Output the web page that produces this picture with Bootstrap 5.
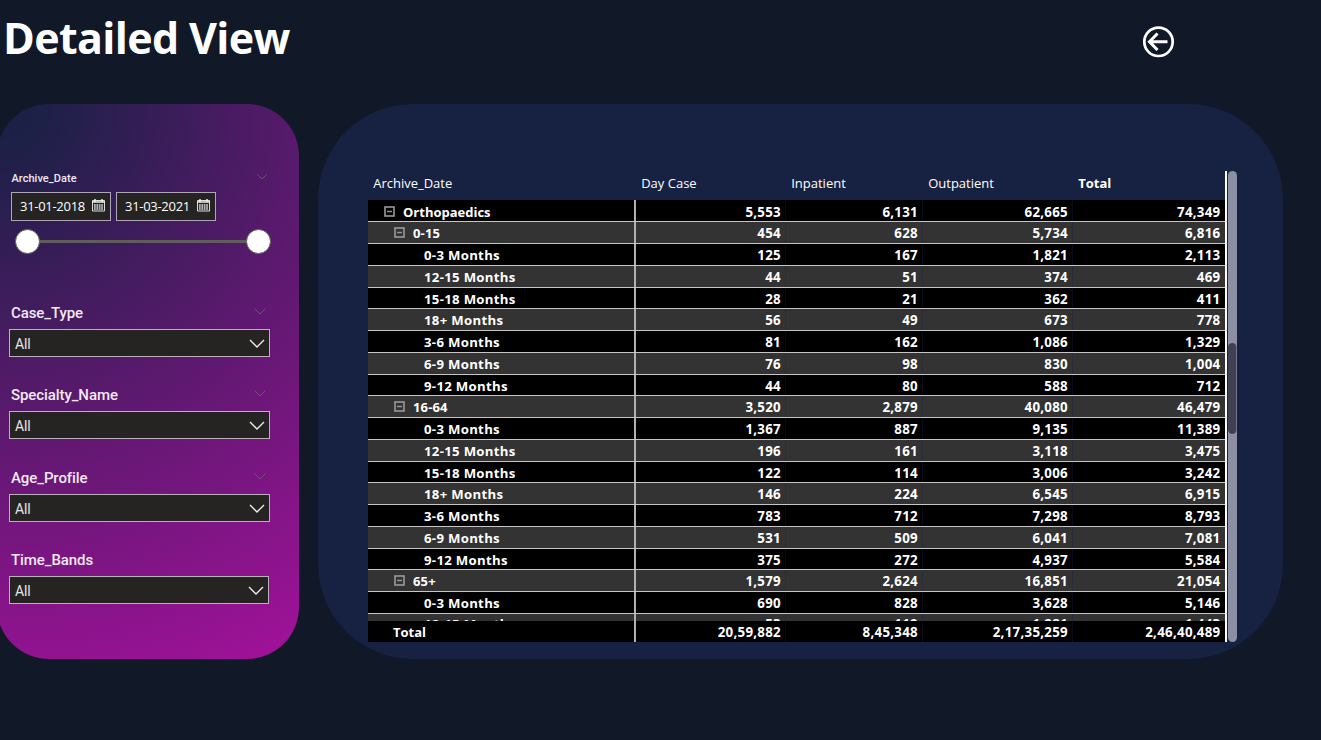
<!DOCTYPE html>
<html lang="en">
<head>
<meta charset="utf-8">
<meta name="viewport" content="width=device-width, initial-scale=1">
<title>Detailed View</title>
<link href="https://cdn.jsdelivr.net/npm/bootstrap@5.3.0/dist/css/bootstrap.min.css" rel="stylesheet">
<style>
  body { background:#111827; color:#fff; font-family:"Open Sans","Noto Sans",sans-serif; width:1321px; height:740px; }
  .page-head { height:104px; padding-left:3px; }
  .page-title { font-size:43px; font-weight:700; line-height:58px; margin-top:9px; letter-spacing:-.65px; white-space:nowrap; }
  .back-btn { width:33px; height:33px; margin:25px 146px 0 0; }
  .filters { width:301.500px; height:555px; margin:.4px 0 0 -3px; border-radius:52px; padding:66.600px 0 0 12px;
    background:radial-gradient(circle at 0 0,#192146 0,#1e2048 8%,#a3119b 100%); }
  .visual { width:965px; height:555px; margin:.4px 0 0 19.500px; border-radius:95px; background:#172141; padding:66.600px 0 0 50px; }
  .flabel { font-family:Roboto,sans-serif; font-weight:500; font-size:15px; line-height:20px; padding-left:2px; color:#f1e9f4; letter-spacing:-.08px; }
  .flabel.tiny { font-size:11px; line-height:16px; padding-left:2.500px; letter-spacing:.04px; position:relative; top:.500px; }
  .slicer-head { width:261px; }
  .slicer-head svg { margin-bottom:3px; }
  .date-box { width:100px; height:29px; border:1px solid #b0a5b6; background:#252423; font-size:13px; padding:0 5px 0 8px; }
  .date-box span { letter-spacing:-.29px; }
  .date-box svg { margin-top:-2px; }
  .range { width:262px; height:26px; margin-top:8px; padding:0 0 0 6px; }
  .knob { width:25px; height:25px; border-radius:50%; background:#fff; border:1px solid #605e5c; flex:none; }
  .rail { width:206px; height:3px; background:#605e5c; }
  .pick { width:261px; height:28px; border:1px solid #b9b3b9; background:#252423; font-family:Roboto,sans-serif; font-size:14px; color:#e8e6e4; padding:2px 4px 0 5px; }
  .pick span { padding-top:1px; letter-spacing:-.1px; }
  .slicer { height:82.4px; }
  .matrix { width:859px; height:471px; border-right:2px solid #fff; font-size:13px; }
  .mrow { height:21.75px; border-bottom:1px solid #c8c6c4; font-weight:700; background:#000; flex:none; }
  .mrow:nth-child(even) { background:#333; }
  .mrow:first-child { height:22.5px; }
  .mhead { height:29px; line-height:25px; }
  .mhead > div { padding-left:5.2px; }
  .c0 { width:268px; } .c1 { width:150px; } .c2 { width:137px; } .c3 { width:150px; } .c4 { width:152px; }
  .mrow > div, .mtotal > div { line-height:23px; white-space:nowrap; }
  .mrow:nth-child(even) > div { line-height:22.400px; }
  .mrow:last-child > div { line-height:21.800px; }
  .mrow:first-child > div { line-height:24.500px; }
  .mrow .c0, .mtotal .c0 { border-right:2px solid #b3b0ad; }
  .num { text-align:right; padding-right:4px; border-right:1px solid rgba(23,33,65,.35); font-size:13.300px; letter-spacing:.28px; }
  .c4.num { border:0; padding-right:4.5px; }
  .mbody { height:421px; overflow:hidden; }
  .mtotal { height:21px; background:#000; font-weight:700; }
  .mtotal > div { line-height:22.600px; }
  .lv0 { padding-left:15px; } .lv1 { padding-left:25px; letter-spacing:.15px; } .lv2 { padding-left:56px; font-size:13.200px; letter-spacing:.3px; }
  .mtotal .lv1 { letter-spacing:0; }
  .toggle { margin:0 8px 0 1px; vertical-align:-1px; position:relative; top:-1px; }
  .track { width:9px; height:471px; margin-left:1px; border-radius:5px; background:#8a8fa3; padding-top:172px; }
  .thumb { height:91px; border-radius:5px; background:#404150; border-right:1px solid #70758a; }
</style>
</head>
<body class="overflow-hidden">
<header class="page-head d-flex justify-content-between align-items-start">
  <h1 class="page-title mb-0">Detailed View</h1>
  <svg class="back-btn" viewBox="0 0 33 33" fill="none" stroke="#fff"><circle cx="16.5" cy="16.8" r="14.2" stroke-width="2.7"/><path d="M25.500 16.800H8M15.500 8.500L7.500 16.800L15.500 25" stroke-width="3"/></svg>
</header>
<main class="d-flex">
  <aside class="filters">
    <div class="slicer-head d-flex justify-content-between align-items-center">
      <div class="flabel tiny">Archive_Date</div>
      <svg width="10" height="6" style="margin-right:3px" fill="none" stroke="#66586b"><path d="M.5.5L5 5L9.500.5"/></svg>
    </div>
    <div class="d-flex" style="gap:5px;margin:5px 0 0 2px">
      <div class="date-box d-flex align-items-center justify-content-between"><span>31-01-2018</span><svg class="cal" width="13" height="13" viewBox="0 0 13 13"></svg></div>
      <div class="date-box d-flex align-items-center justify-content-between"><span>31-03-2021</span><svg class="cal" width="13" height="13" viewBox="0 0 13 13"></svg></div>
    </div>
    <div class="range d-flex align-items-center"><div class="knob"></div><div class="rail"></div><div class="knob"></div></div>
    <div id="slicers" style="margin-top:48px"></div>
  </aside>
  <section class="visual d-flex">
    <div class="matrix d-flex flex-column">
      <div class="mhead d-flex"><div class="c0">Archive_Date</div><div class="c1">Day Case</div><div class="c2">Inpatient</div><div class="c3">Outpatient</div><div class="c4 fw-bold">Total</div></div>
      <div class="mbody d-flex flex-column" id="rows"></div>
      <div class="mtotal d-flex"><div class="c0 lv1">Total</div><div class="c1 num">20,59,882</div><div class="c2 num">8,45,348</div><div class="c3 num">2,17,35,259</div><div class="c4 num">2,46,40,489</div></div>
    </div>
    <div class="track"><div class="thumb"></div></div>
  </section>
</main>
<script src="https://cdn.jsdelivr.net/npm/bootstrap@5.3.0/dist/js/bootstrap.bundle.min.js"></script>
<script>
  const rows = `0|Orthopaedics|5,553|6,131|62,665|74,349
1|0-15|454|628|5,734|6,816
2|0-3 Months|125|167|1,821|2,113
2|12-15 Months|44|51|374|469
2|15-18 Months|28|21|362|411
2|18+ Months|56|49|673|778
2|3-6 Months|81|162|1,086|1,329
2|6-9 Months|76|98|830|1,004
2|9-12 Months|44|80|588|712
1|16-64|3,520|2,879|40,080|46,479
2|0-3 Months|1,367|887|9,135|11,389
2|12-15 Months|196|161|3,118|3,475
2|15-18 Months|122|114|3,006|3,242
2|18+ Months|146|224|6,545|6,915
2|3-6 Months|783|712|7,298|8,793
2|6-9 Months|531|509|6,041|7,081
2|9-12 Months|375|272|4,937|5,584
1|65+|1,579|2,624|16,851|21,054
2|0-3 Months|690|828|3,628|5,146
2|12-15 Months|53|119|1,281|1,443`.split("\n").map(r => r.split("|"));
  const toggle = '<svg class="toggle" width="11" height="11" fill="none" stroke="#999"><rect x="1" y="1" width="9" height="9" stroke-width="1.6"/><path d="M3 5.500H8" stroke-width="1.4"/></svg>';
  document.getElementById("rows").innerHTML = rows.map(([lv, name, ...v]) =>
    `<div class="mrow d-flex"><div class="c0 lv${lv}">${lv < 2 ? toggle : ""}${name}</div>${v.map((n, i) => `<div class="c${i + 1} num">${n}</div>`).join("")}</div>`).join("");
  document.getElementById("slicers").innerHTML = ["Case_Type", "Specialty_Name", "Age_Profile", "Time_Bands"].map((n, i) =>
    `<div class="slicer"><div class="slicer-head d-flex justify-content-between align-items-center"><div class="flabel">${n}</div>${i < 3 ? '<svg width="12" height="7" style="margin-right:4px" fill="none" stroke="#66586b"><path d="M.5.5L6 6L11.500.5"/></svg>' : ""}</div>
     <div class="pick d-flex align-items-center justify-content-between" style="margin-top:6px;width:${i < 3 ? 261 : 260}px"><span>All</span><svg width="16" height="10" fill="none" stroke="#eee" stroke-width="1.400"><path d="M1 1L8 8L15 1"/></svg></div></div>`).join("");
  document.querySelectorAll(".cal").forEach(c => c.innerHTML = '<path d="M.5 1.500H12.500V12H.5Z" fill="none" stroke="#ddd"/><path d="M0 3H13M3 0V3M10 0V3" stroke="#eee" stroke-width="1.5"/><path d="M2 6H11.500M2 8H11.500M2 10H11.500" stroke="#ddd" stroke-width="1.300" stroke-dasharray="1.700 .7"/>');
</script>
</body>
</html>
